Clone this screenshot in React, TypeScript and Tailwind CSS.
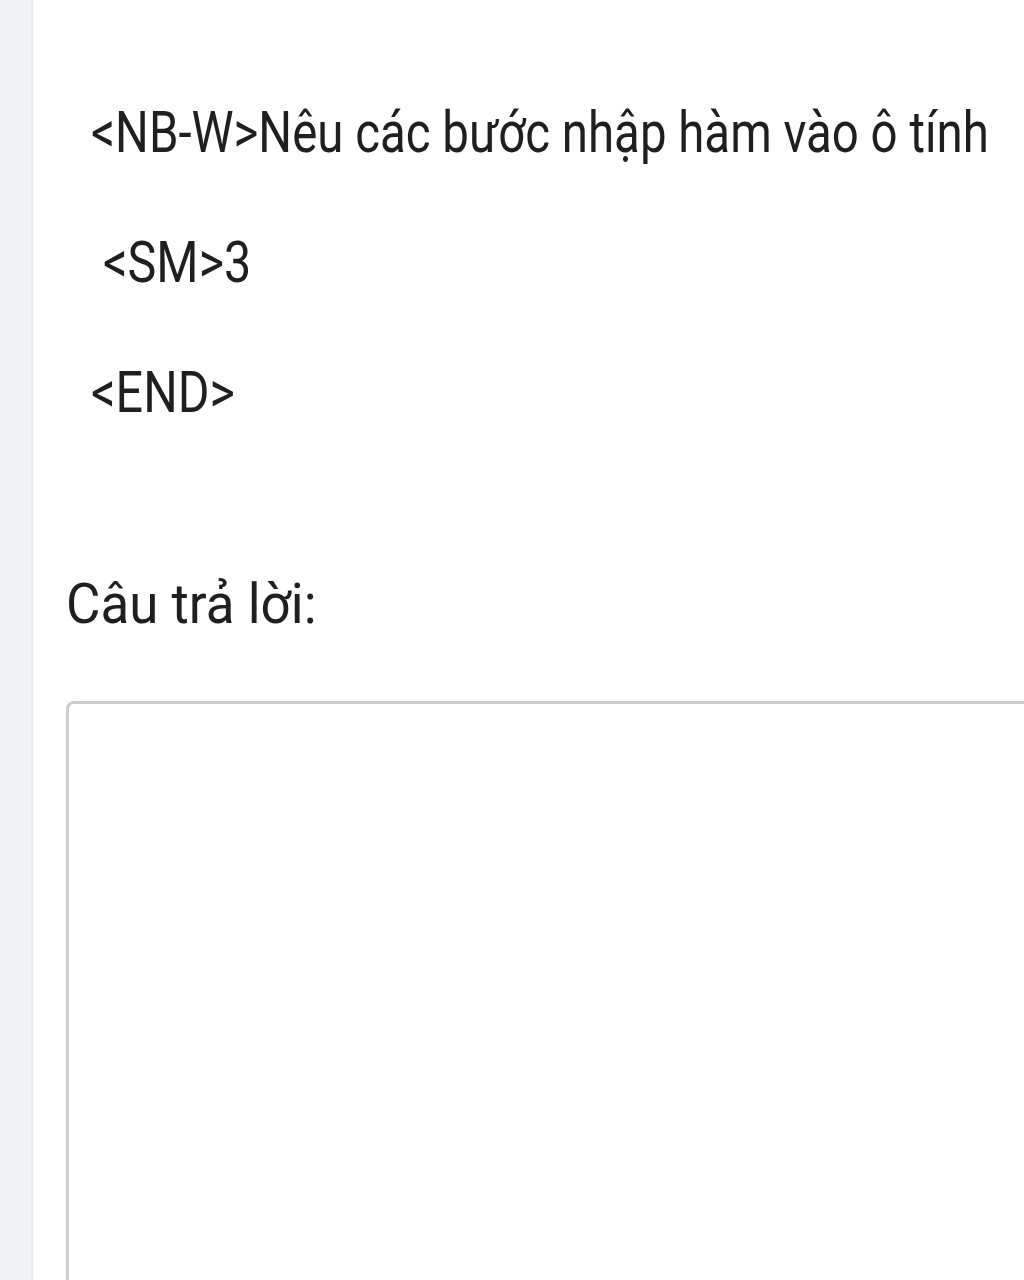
export default function App() {
  return (
    <div className="flex h-[1280px] w-[1024px] overflow-hidden bg-white" style={{ fontFamily: "Roboto, 'Noto Sans', sans-serif" }}>
      <div className="w-[33px] shrink-0 border-r-2 border-[#e8e9eb] bg-[#f1f2f4]" />
      <div className="flex-1 pl-[33px] text-[#1f1f1f] whitespace-nowrap">
        <div className="pt-[98px] pl-[25px] text-[58px] leading-[68px]">
          <span className="inline-block origin-left scale-x-[0.817]">&lt;NB-W&gt;Nêu các bước nhập hàm vào ô tính</span>
        </div>
        <div className="mt-[62px] pl-[37px] text-[58px] leading-[68px]">
          <span className="inline-block origin-left scale-x-[0.835]">&lt;SM&gt;3</span>
        </div>
        <div className="mt-[62px] pl-[25px] text-[58px] leading-[68px]">
          <span className="inline-block origin-left scale-x-[0.835]">&lt;END&gt;</span>
        </div>
        <div className="mt-[144px] text-[56px] leading-[68px]">
          <span className="inline-block origin-left scale-x-[0.945]">Câu trả lời:</span>
        </div>
        <div className="mt-[63px] h-[700px] w-[1000px] rounded-[8px] border-[3px] border-[#cccccc]" />
      </div>
    </div>
  );
}
